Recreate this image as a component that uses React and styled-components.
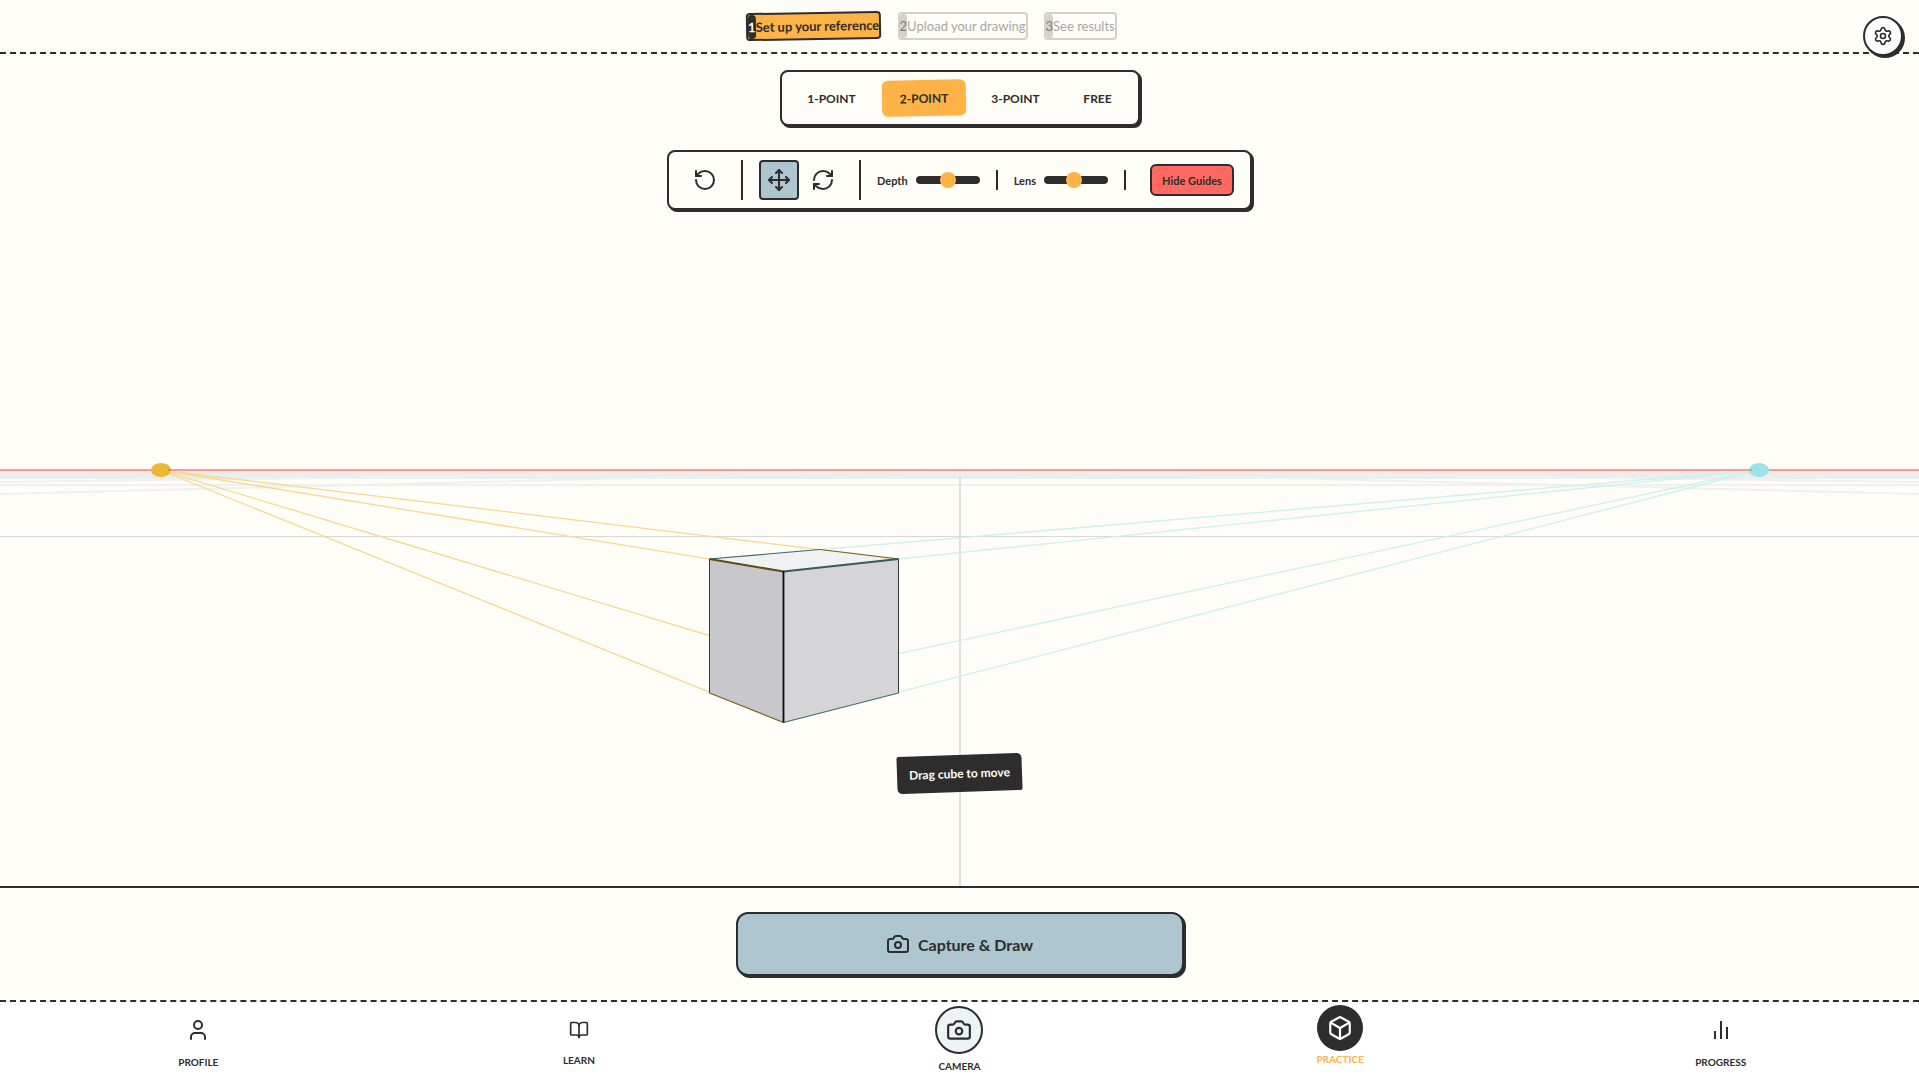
import React, { useState } from 'react';
import styled, { createGlobalStyle } from 'styled-components';
import { BookOpen, Box, Camera, Move, RefreshCw, RotateCcw, Settings, User } from 'lucide-react';

const ink = '#2d2d2d';
const paper = '#fffdf7';
const orange = '#ffb347';
const blue = '#aec6cf';
const red = '#ff6961';

const GlobalStyle = createGlobalStyle`
  * {
    box-sizing: border-box;
  }

  body {
    margin: 0;
    background: ${paper};
    color: ${ink};
    font-family: Lato, 'Noto Sans', sans-serif;
  }

  button, input {
    font-family: inherit;
    color: inherit;
  }
`;

const Page = styled.div`
  display: flex;
  flex-direction: column;
  min-height: 100vh;
`;

const Header = styled.header`
  display: flex;
  justify-content: center;
  padding: 12px 56px 12px 0;
  border-bottom: 2px dashed ${ink};
`;

const Steps = styled.ol`
  display: flex;
  gap: 16px;
  margin: 0;
  padding: 0;
  list-style: none;
`;

const Step = styled.li`
  display: flex;
  border: 2px solid ${props => (props.$active ? ink : '#d2d1cc')};
  border-radius: 4px;
  background: ${props => (props.$active ? orange : 'transparent')};
  color: ${props => (props.$active ? ink : '#a9a8a4')};
  font-size: 13px;
  line-height: 24px;
  font-weight: ${props => (props.$active ? 'bold' : 'normal')};
  transform: ${props => (props.$active ? 'rotate(-1deg)' : 'none')};
`;

const StepNumber = styled.span`
  border-radius: 4px;
  background: ${props => (props.$active ? ink : '#d2d1cc')};
  color: ${props => (props.$active ? '#fff' : '#7d7c79')};
`;

const SettingsButton = styled.button`
  position: fixed;
  top: 16px;
  right: 16px;
  z-index: 2;
  display: flex;
  align-items: center;
  justify-content: center;
  width: 40px;
  height: 40px;
  padding: 0;
  border: 2px solid ${ink};
  border-radius: 50%;
  background: #fff;
  box-shadow: 2px 2px 0 ${ink};
  cursor: pointer;
`;

const Viewport = styled.main`
  position: relative;
  flex: 1;
  min-height: 480px;
  overflow: hidden;
`;

const SceneSvg = styled.svg`
  position: absolute;
  width: 100%;
  height: 100%;
`;

const Controls = styled.div`
  position: absolute;
  top: 16px;
  left: 0;
  right: 0;
  display: flex;
  flex-direction: column;
  align-items: center;
  gap: 24px;
`;

const Panel = styled.div`
  border: 2px solid ${ink};
  border-radius: 8px;
  background: ${paper};
  box-shadow: 2px 2px 0 ${ink};
`;

const Tabs = styled(Panel)`
  display: grid;
  grid-template-columns: 84px 84px 84px 64px;
  gap: 8px;
  padding: 8px;
`;

const Tab = styled.button`
  height: 36px;
  padding: 0;
  border: none;
  border-radius: 6px;
  background: ${props => (props.$active ? orange : 'transparent')};
  box-shadow: ${props => (props.$active ? '0 1px 2px rgba(0, 0, 0, 0.08)' : 'none')};
  transform: ${props => (props.$active ? 'rotate(-1deg)' : 'none')};
  font-size: 12px;
  font-weight: bold;
  cursor: pointer;
`;

const Toolbar = styled(Panel)`
  display: flex;
  align-items: center;
  gap: 16px;
  padding: 8px 16px;
`;

const ToolGroup = styled.div`
  display: flex;
  gap: 4px;
`;

const ToolButton = styled.button`
  display: flex;
  align-items: center;
  justify-content: center;
  width: 40px;
  height: 40px;
  padding: 0;
  border: 2px solid ${props => (props.$active ? ink : 'transparent')};
  border-radius: 4px;
  background: ${props => (props.$active ? blue : 'transparent')};
  cursor: pointer;
`;

const Divider = styled.span`
  width: 2px;
  height: ${props => (props.$short ? '20px' : '40px')};
  background: ${ink};
`;

const SliderLabel = styled.label`
  display: flex;
  align-items: center;
  gap: 8px;
  font-size: 11px;
  font-weight: bold;
`;

const Slider = styled.input`
  appearance: none;
  width: 64px;
  height: 8px;
  margin: 0;
  border-radius: 4px;
  background: ${ink};
  cursor: pointer;

  &::-webkit-slider-thumb {
    appearance: none;
    width: 16px;
    height: 16px;
    border-radius: 50%;
    background: ${orange};
  }
`;

const GuidesButton = styled.button`
  width: 84px;
  height: 32px;
  margin-left: 8px;
  padding: 0;
  border: 2px solid ${ink};
  border-radius: 6px;
  background: ${red};
  font-size: 11px;
  font-weight: bold;
  cursor: pointer;
`;

const HintRow = styled.div`
  position: absolute;
  bottom: 94px;
  left: 0;
  right: 0;
  display: flex;
  justify-content: center;
  pointer-events: none;
`;

const Hint = styled.div`
  padding: 8px 12px;
  border-radius: 2px 5px 2px 5px;
  background: ${ink};
  color: ${paper};
  font-size: 12px;
  line-height: 21px;
  font-weight: bold;
  transform: rotate(-2deg);
`;

const CaptureBar = styled.section`
  display: flex;
  justify-content: center;
  padding: 24px;
  border-top: 2px solid ${ink};
`;

const CaptureButton = styled.button`
  display: flex;
  align-items: center;
  justify-content: center;
  gap: 8px;
  width: 100%;
  max-width: 448px;
  height: 64px;
  border: 2px solid ${ink};
  border-radius: 12px;
  background: ${blue};
  box-shadow: 2px 2px 0 ${ink};
  font-size: 16px;
  font-weight: bold;
  cursor: pointer;
`;

const Nav = styled.nav`
  display: flex;
  align-items: center;
  padding: 3px 8px 4px;
  border-top: 2px dashed ${ink};
  background: #fff;
`;

const NavLink = styled.a`
  flex: 1;
  display: flex;
  flex-direction: column;
  align-items: center;
  gap: ${props => (props.$active ? '0' : '4px')};
  padding-bottom: ${props => (props.$active ? '8px' : '0')};
  color: ${props => (props.$active ? orange : ink)};
  font-size: 10px;
  line-height: 16px;
  font-weight: bold;
  text-decoration: none;
`;

const NavIcon = styled.span`
  display: flex;
  padding: 8px;
`;

const CameraCircle = styled(NavIcon)`
  padding: 9px;
  border: 2px solid ${ink};
  border-radius: 50%;
  background: #edf4f5;
`;

const ActiveCircle = styled(NavIcon)`
  padding: 10px;
  border-radius: 50%;
  background: ${ink};
  color: #fff;
`;

const BarsIcon = () => (
  <svg width="24" height="24" viewBox="0 0 24 24" fill="none" stroke="currentColor" strokeWidth="2">
    <path d="M6 21v-8M12 21V3M18 21V9" />
  </svg>
);

// The scene is drawn in page-wide units, the horizon sits at y = 416
const Scene = ({ guides }) => (
  <SceneSvg viewBox="0 0 1919 832" preserveAspectRatio="xMidYMid slice" fill="none">
    <rect x="0" y="417" width="1919" height="8" fill="#ededed" />
    <g stroke="#f0f0ef" strokeWidth="2">
      <path d="M0 431H1919" />
      <path d="M0 440L960 416L1919 440" />
      <path d="M0 428L960 416L1919 428" />
    </g>
    <path d="M0 482.500H1919" stroke="#d8d8da" />
    <path d="M960 422V832" stroke="#e2e1e0" strokeWidth="2" />

    {guides && (
      <g>
        <g stroke="#f3da90" strokeWidth="1.300">
          <path d="M160 416L898 505M160 416L783 517M160 416L784 604M160 416L783 668" />
        </g>
        <g stroke="#cdf1ec" strokeWidth="1.300">
          <path d="M1759 416L709 505M1759 416L783 517M1759 416L784 624M1759 416L783 668" />
        </g>
        <path d="M0 416H1919" stroke="#f79a98" strokeWidth="2" />
        <ellipse cx="161" cy="416" rx="10" ry="7" fill="#ebb835" />
        <path d="M168 416H171" stroke="#e58a2f" strokeWidth="2" />
        <ellipse cx="1759" cy="416" rx="10" ry="7" fill="#9be4e1" />
        <path d="M1749 416H1752" stroke="#8a9a9a" />
      </g>
    )}

    <path d="M709.500 505L783.500 517.500V668.500L709.500 639Z" fill="#c8c7cc" />
    <path d="M783.500 517.500L898.500 505V639L783.500 668.500Z" fill="#d5d5d7" />
    <path d="M709.500 505L820 495.500L898.500 505L783.500 517.500Z" fill="#f0f1f3" />
    <path d="M709.500 505V639M898.500 505V639" stroke="#3a3a3a" />
    <path d="M709.500 639L783.500 668.500M820 495.500L898.500 505" stroke="#79601f" strokeWidth="1.200" />
    <path d="M709.500 505L820 495.500M783.500 668.500L898.500 639" stroke="#436c6b" strokeWidth="1.200" />
    <path d="M709.500 505L783.500 517.500" stroke="#5f4a12" strokeWidth="2" />
    <path d="M783.500 517.500L898.500 505" stroke="#385a5a" strokeWidth="2" />
    <path d="M783.500 517V668.500" stroke="#0c0c0c" strokeWidth="1.800" />
  </SceneSvg>
);

const steps = ['Set up your reference', 'Upload your drawing', 'See results'];
const modes = ['1-POINT', '2-POINT', '3-POINT', 'FREE'];

const App = () => {
  const [mode, setMode] = useState('2-POINT');
  const [tool, setTool] = useState('move');
  const [depth, setDepth] = useState(50);
  const [lens, setLens] = useState(46);
  const [guides, setGuides] = useState(true);

  return (
    <Page>
      <GlobalStyle />
      <Header>
        <Steps>
          {steps.map((step, i) => (
            <Step key={step} $active={i === 0}>
              <StepNumber $active={i === 0}>{i + 1}</StepNumber>
              <span>{step}</span>
            </Step>
          ))}
        </Steps>
      </Header>
      <SettingsButton aria-label="Settings"><Settings size={20} /></SettingsButton>

      <Viewport>
        <Scene guides={guides} />
        <Controls>
          <Tabs>
            {modes.map(name => (
              <Tab key={name} $active={name === mode} onClick={() => setMode(name)}>{name}</Tab>
            ))}
          </Tabs>
          <Toolbar>
            <ToolButton aria-label="Reset"><RotateCcw size={24} /></ToolButton>
            <Divider />
            <ToolGroup>
              <ToolButton aria-label="Move" $active={tool === 'move'} onClick={() => setTool('move')}>
                <Move size={24} />
              </ToolButton>
              <ToolButton aria-label="Rotate" $active={tool === 'rotate'} onClick={() => setTool('rotate')}>
                <RefreshCw size={24} />
              </ToolButton>
            </ToolGroup>
            <Divider />
            <SliderLabel>
              Depth
              <Slider type="range" value={depth} onChange={e => setDepth(e.target.value)} />
            </SliderLabel>
            <Divider $short />
            <SliderLabel>
              Lens
              <Slider type="range" value={lens} onChange={e => setLens(e.target.value)} />
            </SliderLabel>
            <Divider $short />
            <GuidesButton onClick={() => setGuides(!guides)}>{guides ? 'Hide Guides' : 'Show Guides'}</GuidesButton>
          </Toolbar>
        </Controls>
        <HintRow><Hint>Drag cube to move</Hint></HintRow>
      </Viewport>

      <CaptureBar>
        <CaptureButton><Camera size={24} />Capture &amp; Draw</CaptureButton>
      </CaptureBar>

      <Nav>
        <NavLink href="#profile"><NavIcon><User size={24} /></NavIcon>PROFILE</NavLink>
        <NavLink href="#learn"><NavIcon><BookOpen size={20} /></NavIcon>LEARN</NavLink>
        <NavLink href="#camera"><CameraCircle><Camera size={26} /></CameraCircle>CAMERA</NavLink>
        <NavLink href="#practice" $active><ActiveCircle><Box size={26} /></ActiveCircle>PRACTICE</NavLink>
        <NavLink href="#progress"><NavIcon><BarsIcon /></NavIcon>PROGRESS</NavLink>
      </Nav>
    </Page>
  );
};

export default App;
